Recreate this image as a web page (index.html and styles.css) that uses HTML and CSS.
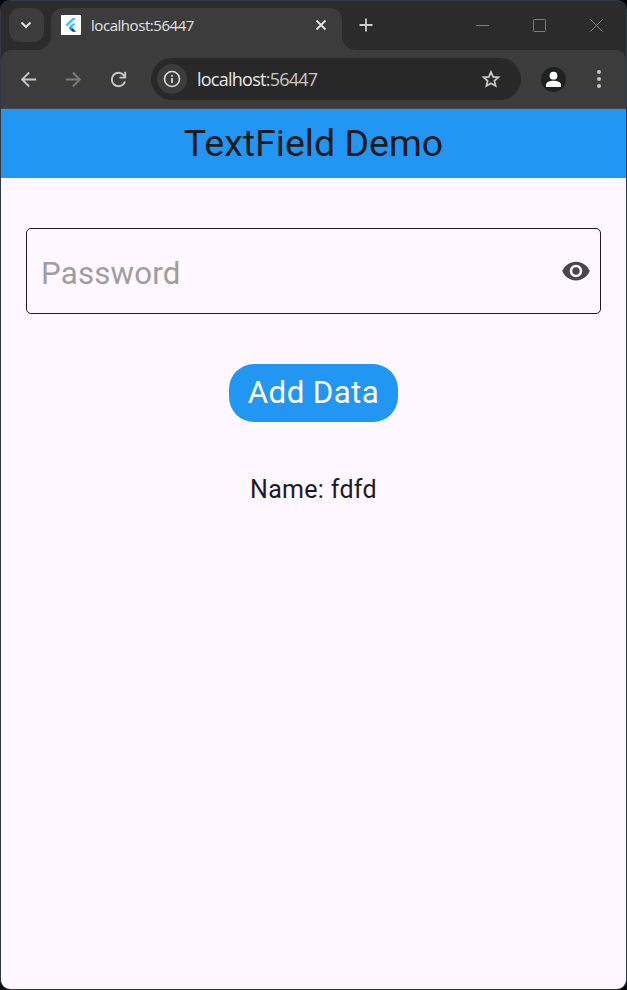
FILE: index.html
```
<!DOCTYPE html>
<html lang="en">
<head>
<meta charset="utf-8">
<title>TextField Demo</title>
<link rel="stylesheet" href="styles.css">
</head>
<body>
<div class="window">
  <header class="tabstrip">
    <button class="tab-search" aria-label="Search tabs"><svg width="12" height="8" viewBox="0 0 12 8"><path d="M1.500 1.500 6 6l4.500-4.500" fill="none" stroke="#e3e3e3" stroke-width="2"/></svg></button>
    <div class="tab">
      <svg class="favicon" width="20" height="20" viewBox="0 0 20 20"><path fill="#fff" d="M0 0h20v20H0z"/><path fill="#45c4fb" d="M11.500 3H15l-8.500 8.500-2-2z"/><path fill="#45c4fb" d="M11.700 8.500H15l-4.500 4.500-2-2z"/><path fill="#29a6f0" d="m7.500 13 2-2 2.200 2.200-2.200 2z"/><path fill="#01479b" d="m9.500 15 2-2 3.700 3.700h-3.500z"/></svg>
      <span class="tab-title">localhost:56447</span>
      <svg class="tab-close" width="12" height="12" viewBox="0 0 12 12"><path d="m1.500 1.500 9 9m0-9-9 9" stroke="#e3e3e3" stroke-width="1.800"/></svg>
    </div>
    <svg class="new-tab" width="14" height="14" viewBox="0 0 14 14"><path d="M7 .5v13M.5 7h13" stroke="#cfcfcf" stroke-width="1.800"/></svg>
    <div class="controls">
      <svg width="13" height="13" viewBox="0 0 13 13"><path d="M0 6.500h13" stroke="#7d7d7d"/></svg>
      <svg width="13" height="13" viewBox="0 0 13 13"><rect x=".5" y=".5" width="12" height="12" rx=".8" fill="none" stroke="#7d7d7d"/></svg>
      <svg width="13" height="13" viewBox="0 0 13 13"><path d="m.3.3 12.400 12.400m0-12.400L.3 12.700" stroke="#7d7d7d"/></svg>
    </div>
  </header>
  <nav class="toolbar">
    <svg class="back" width="23" height="23" viewBox="0 0 24 24"><path fill="#c7c7c7" d="M20 11H7.830l5.590-5.590L12 4l-8 8 8 8 1.410-1.410L7.830 13H20z"/></svg>
    <svg class="forward" width="23" height="23" viewBox="0 0 24 24"><path fill="#7c7c7c" d="m12 4-1.410 1.410L16.170 11H4v2h12.170l-5.580 5.590L12 20l8-8z"/></svg>
    <svg class="reload" width="23" height="23" viewBox="0 0 24 24"><path fill="#c7c7c7" d="M12 20q-3.350 0-5.675-2.325T4 12t2.325-5.675T12 4q1.725 0 3.300.713T18 6.750V4h2v7h-7V9h4.200q-.8-1.400-2.187-2.200T12 6Q9.500 6 7.750 7.750T6 12t1.750 4.250T12 18q1.925 0 3.475-1.100T17.650 14h2.100q-.7 2.650-2.850 4.325T12 20"/></svg>
    <div class="omnibox">
      <span class="site-info"><svg width="18" height="18" viewBox="0 0 18 18"><circle cx="9" cy="9" r="7.500" fill="none" stroke="#dedede" stroke-width="1.600"/><path d="M9 8v5M9 5v1.700" stroke="#dedede" stroke-width="1.700"/></svg></span>
      <span class="url"><span class="host">localhost</span><span class="port">:56447</span></span>
      <svg class="star" width="24" height="24" viewBox="0 0 24 24"><path fill="none" stroke="#c7c7c7" stroke-width="1.800" d="m12 5 2.100 4.800 5.300.45-4 3.500 1.200 5.200L12 16.200l-4.600 2.750 1.200-5.200-4-3.500 5.300-.45z"/></svg>
    </div>
    <svg class="profile" width="25" height="25" viewBox="0 0 25 25"><circle cx="12.500" cy="12.500" r="12.500" fill="#202222"/><circle cx="12.500" cy="8.700" r="3.900" fill="#fff"/><path fill="#fff" d="M5 20v-2c0-3 4-4.200 7.500-4.200S20 15 20 18v2z"/></svg>
    <svg class="menu" width="4" height="18" viewBox="0 0 4 18"><g fill="#c7c7c7"><circle cx="2" cy="2" r="2"/><circle cx="2" cy="9" r="2"/><circle cx="2" cy="16" r="2"/></g></svg>
  </nav>
  <main class="page">
    <h1 class="appbar">TextField Demo</h1>
    <div class="content">
      <div class="field">
        <span class="hint">Password</span>
        <svg width="30" height="30" viewBox="0 0 24 24"><path fill="#49454f" d="M12 4.500C7 4.500 2.730 7.610 1 12c1.730 4.390 6 7.500 11 7.500s9.270-3.110 11-7.500c-1.730-4.390-6-7.500-11-7.500M12 17c-2.760 0-5-2.240-5-5s2.240-5 5-5 5 2.240 5 5-2.240 5-5 5m0-8c-1.660 0-3 1.340-3 3s1.340 3 3 3 3-1.340 3-3-1.340-3-3-3"/></svg>
      </div>
      <button class="add">Add Data</button>
      <p class="name">Name: fdfd</p>
    </div>
  </main>
</div>
</body>
</html>
```
FILE: styles.css
```
* { box-sizing: border-box; }
body { margin: 0; background: #05080f; }
button { border: 0; padding: 0; }
svg { display: block; flex: none; }
.window {
  height: 990px;
  display: flex;
  flex-direction: column;
  border: 1px solid #2f3844;
  border-radius: 10px;
  overflow: hidden;
  background: #2b2b2b;
}
.tabstrip {
  height: 49px;
  flex: none;
  display: flex;
  align-items: flex-start;
  padding-left: 8px;
}
.tab-search {
  width: 35px;
  height: 34px;
  margin-top: 7px;
  border-radius: 11px;
  background: #3c3c3c;
  display: flex;
  align-items: center;
  justify-content: center;
}
.tab-search svg { margin-right: 1px; }
.tab {
  position: relative;
  width: 290.5px;
  height: 42.5px;
  margin: 6.5px 0 0 7px;
  padding: 0 14.5px 6.5px 10px;
  border-radius: 12px 12px 0 0;
  background: #3c3c3c;
  display: flex;
  align-items: center;
}
.tab::before, .tab::after {
  content: "";
  position: absolute;
  bottom: 0;
  width: 14px;
  height: 14px;
}
.tab::before { left: -14px; background: radial-gradient(circle at 0 0, transparent 13.5px, #3c3c3c 14.5px); }
.tab::after { right: -14px; background: radial-gradient(circle at 100% 0, transparent 13.5px, #3c3c3c 14.5px); }
.favicon { margin-top: -1px; }
.tab-close { margin-top: -1px; }
.tab-title {
  flex: 1;
  margin: -2px 0 0 10px;
  font: 15px/20px "Open Sans", sans-serif;
  letter-spacing: -0.45px;
  color: #e3e3e3;
}
.new-tab { margin: 17px 0 0 17.5px; }
.controls {
  flex: 1;
  display: flex;
  justify-content: flex-end;
  gap: 44px;
  margin: 18px 23px 0 0;
}
.toolbar {
  height: 58px;
  flex: none;
  display: flex;
  align-items: center;
  padding-left: 16px;
  border-radius: 10px 10px 0 0;
  background: #3c3c3c;
}
.forward, .reload { margin-left: 22px; }
.omnibox {
  width: 370px;
  height: 42px;
  margin-left: 21px;
  padding: 0 18px 0 6px;
  border-radius: 21px;
  background: #282828;
  display: flex;
  align-items: center;
}
.site-info {
  width: 30px;
  height: 30px;
  border-radius: 50%;
  background: #3c3c3c;
  display: flex;
  align-items: center;
  justify-content: center;
}
.url {
  flex: 1;
  margin-left: 10px;
  font: 18px/24px "Open Sans", sans-serif;
  letter-spacing: -0.75px;
  color: #c7c7c7;
}
.host { color: #e8e8e8; }
.profile { margin-left: 20px; }
.menu { margin-left: 30.5px; }
.page {
  flex: 1;
  background: #fef7ff;
  border-top: 1px solid #4b4946;
  font-family: Roboto, sans-serif;
  color: #1d1b20;
}
.appbar {
  height: 69px;
  margin: 0;
  background: #2196f3;
  text-align: center;
  font-size: 37.5px;
  font-weight: 400;
  line-height: 69px;
}
.content {
  display: flex;
  flex-direction: column;
  align-items: center;
  padding: 50px 25px 0;
}
.field {
  width: 100%;
  height: 86px;
  padding: 0 9px 0 14px;
  border: 1px solid #1d1b20;
  border-radius: 5px;
  display: flex;
  align-items: center;
  justify-content: space-between;
}
.hint {
  padding-top: 4px;
  font-size: 31.25px;
  letter-spacing: 0.2px;
  color: #9e9e9e;
}
.add {
  width: 168.5px;
  height: 57.5px;
  margin-top: 50px;
  border-radius: 25px;
  background: #2196f3;
  color: #fff;
  font: 400 31.25px/56px Roboto, sans-serif;
  letter-spacing: 0.4px;
}
.name {
  margin: 50.5px 0 0;
  font-size: 25px;
  line-height: 36px;
  letter-spacing: 0.31px;
}
```
